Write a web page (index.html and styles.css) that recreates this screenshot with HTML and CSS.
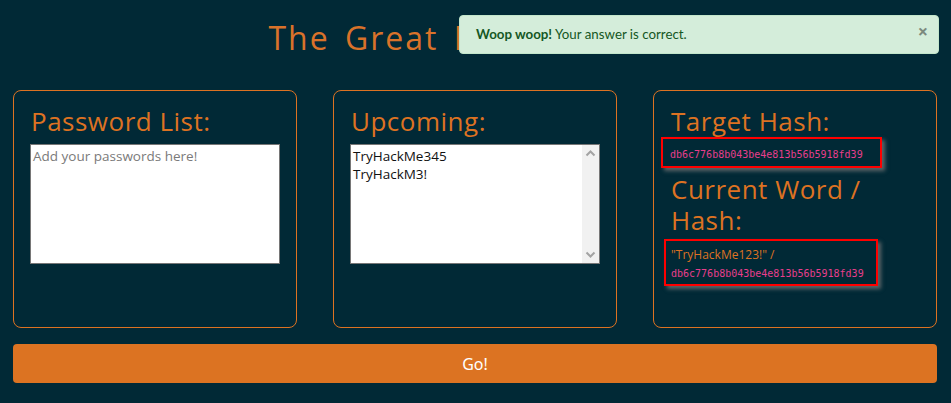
FILE: index.html
```html
<!DOCTYPE html>
<html lang="en">
<head>
<meta charset="utf-8">
<title>The Great Hash Cracker</title>
<link rel="stylesheet" href="styles.css">
</head>
<body>
  <div class="page">
    <h1 class="title">The Great Hash Cracker</h1>
    <div class="panels">
      <section class="panel">
        <h2 class="panel-title">Password List:</h2>
        <textarea class="box" placeholder="Add your passwords here!"></textarea>
      </section>
      <section class="panel">
        <h2 class="panel-title">Upcoming:</h2>
        <div class="box box-wrap">
          <textarea class="box-inner">TryHackMe345
TryHackM3!</textarea>
          <div class="scrollbar">
            <svg class="arrow" width="17" height="17" viewBox="0 0 17 17"><path d="M4.5 10.5 L8.5 6.5 L12.5 10.5" fill="none" stroke="#a3a3a3" stroke-width="2"/></svg>
            <svg class="arrow" width="17" height="17" viewBox="0 0 17 17"><path d="M4.5 6.5 L8.5 10.5 L12.5 6.5" fill="none" stroke="#a3a3a3" stroke-width="2"/></svg>
          </div>
        </div>
      </section>
      <section class="panel">
        <h2 class="panel-title">Target Hash:</h2>
        <div class="hash-box hash-target"><code class="hash">db6c776b8b043be4e813b56b5918fd39</code></div>
        <h2 class="panel-title panel-title-gap">Current Word / Hash:</h2>
        <div class="hash-box hash-current">
          <div class="word">"TryHackMe123!" /</div>
          <code class="hash">db6c776b8b043be4e813b56b5918fd39</code>
        </div>
      </section>
    </div>
    <button class="go">Go!</button>
  </div>
  <div class="toast">
    <span><strong>Woop woop!</strong> Your answer is correct.</span>
    <span class="close">&times;</span>
  </div>
</body>
</html>
```
FILE: styles.css
```css
html, body {
  margin: 0;
  padding: 0;
  background: #012936;
}
body {
  font-family: "Open Sans", "Noto Sans", sans-serif;
  color: #dd7222;
  width: 951px;
  height: 403px;
  overflow: hidden;
  position: relative;
}
.page {
  padding: 17px 14px 0 13px;
  display: flex;
  flex-direction: column;
}
.title {
  margin: 0;
  text-align: center;
  font-weight: 400;
  font-size: 32px;
  line-height: 42px;
  color: #d9722a;
  letter-spacing: 2px;
  word-spacing: 5px;
  height: 42px;
}
.panels {
  margin-top: 31px;
  display: grid;
  grid-template-columns: repeat(3, 1fr);
  column-gap: 36px;
}
.panel {
  box-sizing: border-box;
  border: 1px solid #dd7222;
  border-radius: 8px;
  height: 238px;
  padding: 15px 16px 0 16px;
  display: flex;
  flex-direction: column;
  align-items: flex-start;
}
.panel-title {
  margin: 0;
  font-weight: 400;
  font-size: 26px;
  line-height: 31px;
  color: #dd7222;
  padding-left: 1px;
  letter-spacing: 0.5px;
}
.panel-title-gap {
  margin-top: 6px;
}
.box {
  margin-top: 7px;
  width: 250px;
  height: 120px;
  box-sizing: border-box;
  border: 1px solid #767676;
  padding: 2px;
  font-family: "Open Sans", sans-serif;
  font-size: 13.5px;
  line-height: 18px;
  color: #111;
  resize: none;
  background: #fff;
}
.box::placeholder {
  color: #7a7a7a;
}
.box-wrap {
  display: flex;
  padding: 0;
}
.box-inner {
  flex: 1;
  border: none;
  outline: none;
  margin: 0;
  padding: 2px;
  font-family: "Open Sans", sans-serif;
  font-size: 13.5px;
  line-height: 18px;
  color: #111;
  resize: none;
  background: #fff;
  overflow: hidden;
}
.scrollbar {
  width: 17px;
  background: #f1f1f1;
  display: flex;
  flex-direction: column;
  justify-content: space-between;
}
.arrow {
  display: block;
}
.hash-box {
  border: 2px solid #f00;
  box-shadow: 3px 3px 4px #5d6568;
  box-sizing: border-box;
}
.hash-target {
  margin-left: -9px;
  width: 221px;
  height: 31px;
  padding: 9px 0 0 7px;
}
.hash-current {
  margin-top: 3px;
  margin-left: -6px;
  width: 214px;
  height: 47px;
  padding: 6px 0 0 5px;
}
.hash {
  font-family: "DejaVu Sans Mono", monospace;
  font-size: 10px;
  line-height: 14px;
  color: #e83e8c;
  display: block;
}
.word {
  font-size: 12px;
  line-height: 15px;
  color: #dd7222;
  margin-bottom: 5px;
}
.go {
  margin-top: 16px;
  height: 39px;
  border: none;
  border-radius: 4px;
  background: #dc7322;
  color: #fff;
  font-family: "Noto Sans", sans-serif;
  font-size: 16px;
  cursor: pointer;
}
.toast {
  position: absolute;
  top: 15px;
  left: 459px;
  width: 480px;
  height: 39px;
  box-sizing: border-box;
  background: #d4edda;
  border: 1px solid #c3e6cb;
  border-radius: 4px;
  color: #155724;
  font-family: "Lato", "Noto Sans", sans-serif;
  font-size: 13.3px;
  display: flex;
  align-items: center;
  justify-content: space-between;
  padding: 0 10px 2px 16px;
}
.toast strong {
  font-weight: 700;
}
.close {
  font-family: "Noto Sans", sans-serif;
  font-weight: 700;
  font-size: 18px;
  color: #7b8a7e;
  line-height: 1;
  margin-top: -6px;
}
```
